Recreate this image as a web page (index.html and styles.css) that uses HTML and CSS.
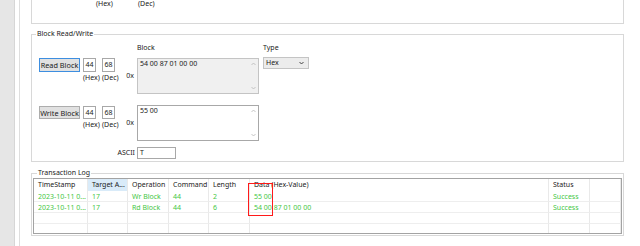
FILE: index.html
```html
<!DOCTYPE html>
<html>
<head>
<meta charset="utf-8">
<link rel="stylesheet" href="styles.css">
</head>
<body>
<div class="app">
  <aside class="side"></aside>
  <div class="divider"></div>
  <main class="main">
    <div class="group top">
      <span class="cap cap-hex">(Hex)</span>
      <span class="cap">(Dec)</span>
    </div>

    <fieldset class="group rw">
      <legend>Block Read/Write</legend>
      <div class="rw-body">
        <div class="row head">
          <div class="sp-ctrl"></div>
          <div class="col-block">Block</div>
          <div class="col-type">Type</div>
        </div>

        <div class="row blk read">
          <div class="ctrl">
            <div class="ctrl-line">
              <button class="btn focus">Read Block</button>
              <div class="num hex">44</div>
              <div class="num dec">68</div>
            </div>
            <div class="caps"><span class="c-hex">(Hex)</span><span>(Dec)</span></div>
          </div>
          <div class="ox">0x</div>
          <div class="area ro">
            <div class="area-text">54 00 87 01 00 00</div>
            <div class="sb">
              <svg width="5" height="4" viewBox="0 0 5 4"><path d="M0.5 3 L2.5 1 L4.5 3" fill="none" stroke="#b8b8b8" stroke-width="0.8"/></svg>
              <svg width="5" height="4" viewBox="0 0 5 4"><path d="M0.5 1 L2.5 3 L4.5 1" fill="none" stroke="#b8b8b8" stroke-width="0.8"/></svg>
            </div>
          </div>
          <div class="select">
            <span>Hex</span>
            <svg width="5" height="4" viewBox="0 0 5 4"><path d="M0.5 1 L2.5 3 L4.5 1" fill="none" stroke="#333" stroke-width="0.9"/></svg>
          </div>
        </div>

        <div class="row blk write">
          <div class="ctrl">
            <div class="ctrl-line">
              <button class="btn">Write Block</button>
              <div class="num hex">44</div>
              <div class="num dec">68</div>
            </div>
            <div class="caps"><span class="c-hex">(Hex)</span><span>(Dec)</span></div>
          </div>
          <div class="ox">0x</div>
          <div class="area">
            <div class="area-text">55 00</div>
            <div class="sb">
              <svg width="5" height="4" viewBox="0 0 5 4"><path d="M0.5 3 L2.5 1 L4.5 3" fill="none" stroke="#b8b8b8" stroke-width="0.8"/></svg>
              <svg width="5" height="4" viewBox="0 0 5 4"><path d="M0.5 1 L2.5 3 L4.5 1" fill="none" stroke="#b8b8b8" stroke-width="0.8"/></svg>
            </div>
          </div>
        </div>

        <div class="row ascii">
          <div class="ascii-label">ASCII</div>
          <div class="ascii-input">T</div>
        </div>
      </div>
    </fieldset>

    <fieldset class="group log">
      <legend>Transaction Log</legend>
      <div class="table">
        <div class="th">TimeStamp</div>
        <div class="th hot">Target A...</div>
        <div class="th">Operation</div>
        <div class="th">Command</div>
        <div class="th">Length</div>
        <div class="th">Data (Hex-Value)</div>
        <div class="th">Status</div>
        <div class="th"></div>

        <div class="td">2023-10-11 0...</div>
        <div class="td">17</div>
        <div class="td">Wr Block</div>
        <div class="td">44</div>
        <div class="td">2</div>
        <div class="td">55 00</div>
        <div class="td">Success</div>
        <div class="td"></div>

        <div class="td">2023-10-11 0...</div>
        <div class="td">17</div>
        <div class="td">Rd Block</div>
        <div class="td">44</div>
        <div class="td">6</div>
        <div class="td">54 00 87 01 00 00</div>
        <div class="td">Success</div>
        <div class="td"></div>

        <div class="td"></div><div class="td"></div><div class="td"></div><div class="td"></div>
        <div class="td"></div><div class="td"></div><div class="td"></div><div class="td"></div>

        <div class="td"></div><div class="td"></div><div class="td"></div><div class="td"></div>
        <div class="td"></div><div class="td"></div><div class="td"></div><div class="td"></div>
      </div>
      <div class="mark"></div>
    </fieldset>
  </main>
</div>
</body>
</html>
```

FILE: styles.css
```css
* { box-sizing: border-box; }
html, body {
  margin: 0;
  padding: 0;
  background: #fff;
}
body {
  width: 640px;
  height: 246px;
  overflow: hidden;
  font-family: "Noto Sans", "Open Sans", sans-serif;
  font-size: 7px;
  line-height: 10px;
  color: #1a1a1a;
}
.app {
  display: flex;
  height: 246px;
}
.side {
  width: 15px;
  flex: none;
  background: #e6e6e6;
  border-right: 1px solid #d6d6d6;
}
.divider {
  width: 5px;
  flex: none;
  border-right: 1px solid #dedede;
}
.main {
  padding-left: 11px;
  width: 604px;
}
.group {
  width: 593px;
  border: 1px solid #d8d8d8;
  margin: 0;
  padding: 0;
  min-inline-size: 0;
}
.group legend {
  padding: 0 1px;
  margin-left: 4px;
  line-height: 10px;
  color: #1a1a1a;
}
.top {
  height: 25px;
  border-top: none;
  display: flex;
  padding-left: 64px;
  margin-top: -1px;
}
.cap { display: block; flex: none; }
.cap-hex { width: 42px; }

.rw {
  margin-top: 5px;
  height: 133px;
}
.rw-body { padding-left: 7px; }
.row { display: flex; }
.head {
  margin-top: 4px;
  height: 10px;
}
.sp-ctrl { width: 98px; }
.col-block { width: 126px; }
.col-type { width: 46px; }

.blk { height: 36px; }
.read { margin-top: 5px; }
.write { margin-top: 11px; }
.ctrl { width: 76px; flex: none; }
.ctrl-line { display: flex; height: 14px; }
.write .ctrl-line { margin-top: 1px; height: 13px; }
.btn {
  width: 41px;
  height: 100%;
  padding: 0;
  font: inherit;
  font-size: 7.3px;
  color: #1a1a1a;
  background: #e1e1e1;
  border: 1px solid #adadad;
  line-height: 10px;
}
.btn.focus { border-color: #3d8ee0; }
.num {
  width: 13px;
  height: 100%;
  border: 1px solid #a8a8a8;
  background: #fff;
  text-align: center;
  display: flex;
  align-items: center;
  justify-content: center;
}
.hex { margin-left: 3px; }
.dec { margin-left: 6px; }
.caps {
  display: flex;
  padding-left: 44px;
  margin-top: 1px;
}
.caps span { flex: none; }
.caps .c-hex { width: 19px; }
.ox {
  width: 22px;
  flex: none;
  align-self: center;
  text-align: right;
  padding-right: 3px;
}
.area {
  width: 122px;
  flex: none;
  height: 36px;
  border: 1px solid #a8a8a8;
  background: #fff;
  display: flex;
}
.area.ro {
  background: #f0f0f0;
  border-color: #c4c4c4;
}
.area-text {
  flex: 1;
  padding: 0 0 0 2px;
}
.sb {
  width: 10px;
  display: flex;
  flex-direction: column;
  justify-content: space-between;
  align-items: center;
  padding: 3px 0 3px;
}
.sb svg { display: block; }
.select {
  margin-left: 4px;
  margin-top: -1px;
  width: 46px;
  height: 12px;
  border: 1px solid #c4c4c4;
  background: #ececec;
  display: flex;
  align-items: center;
  justify-content: space-between;
  padding: 0 4px 0 2px;
}
.select svg { display: block; }
.ascii {
  margin-top: 6px;
  height: 12px;
}
.ascii-label {
  width: 98px;
  text-align: right;
  padding-right: 2px;
  line-height: 12px;
}
.ascii-input {
  width: 39px;
  height: 12px;
  border: 1px solid #a8a8a8;
  background: #fff;
  padding-left: 2px;
  line-height: 10px;
}

.log {
  margin-top: 6px;
  height: 68px;
  padding-left: 1px;
  position: relative;
}
.table {
  width: 589px;
  height: 56px;
  border: 1px solid #a3a3a3;
  display: grid;
  grid-template-columns: 54px 40px 41px 40px 41px 299px 41px 31px;
  grid-template-rows: 12px repeat(4, 11px);
  overflow: hidden;
}
.th, .td {
  border-right: 1px solid #e9e9e9;
  padding-left: 4px;
  white-space: nowrap;
  overflow: hidden;
}
.th {
  line-height: 12px;
  color: #1a1a1a;
}
.th.hot { background: #d9ebf9; }
.td {
  line-height: 11px;
  color: #45c745;
  border-bottom: 1px solid #eeeeee;
}
.mark {
  position: absolute;
  left: 216px;
  top: 5px;
  width: 25px;
  height: 33px;
  border: 1.5px solid #ff1a1a;
}
```
